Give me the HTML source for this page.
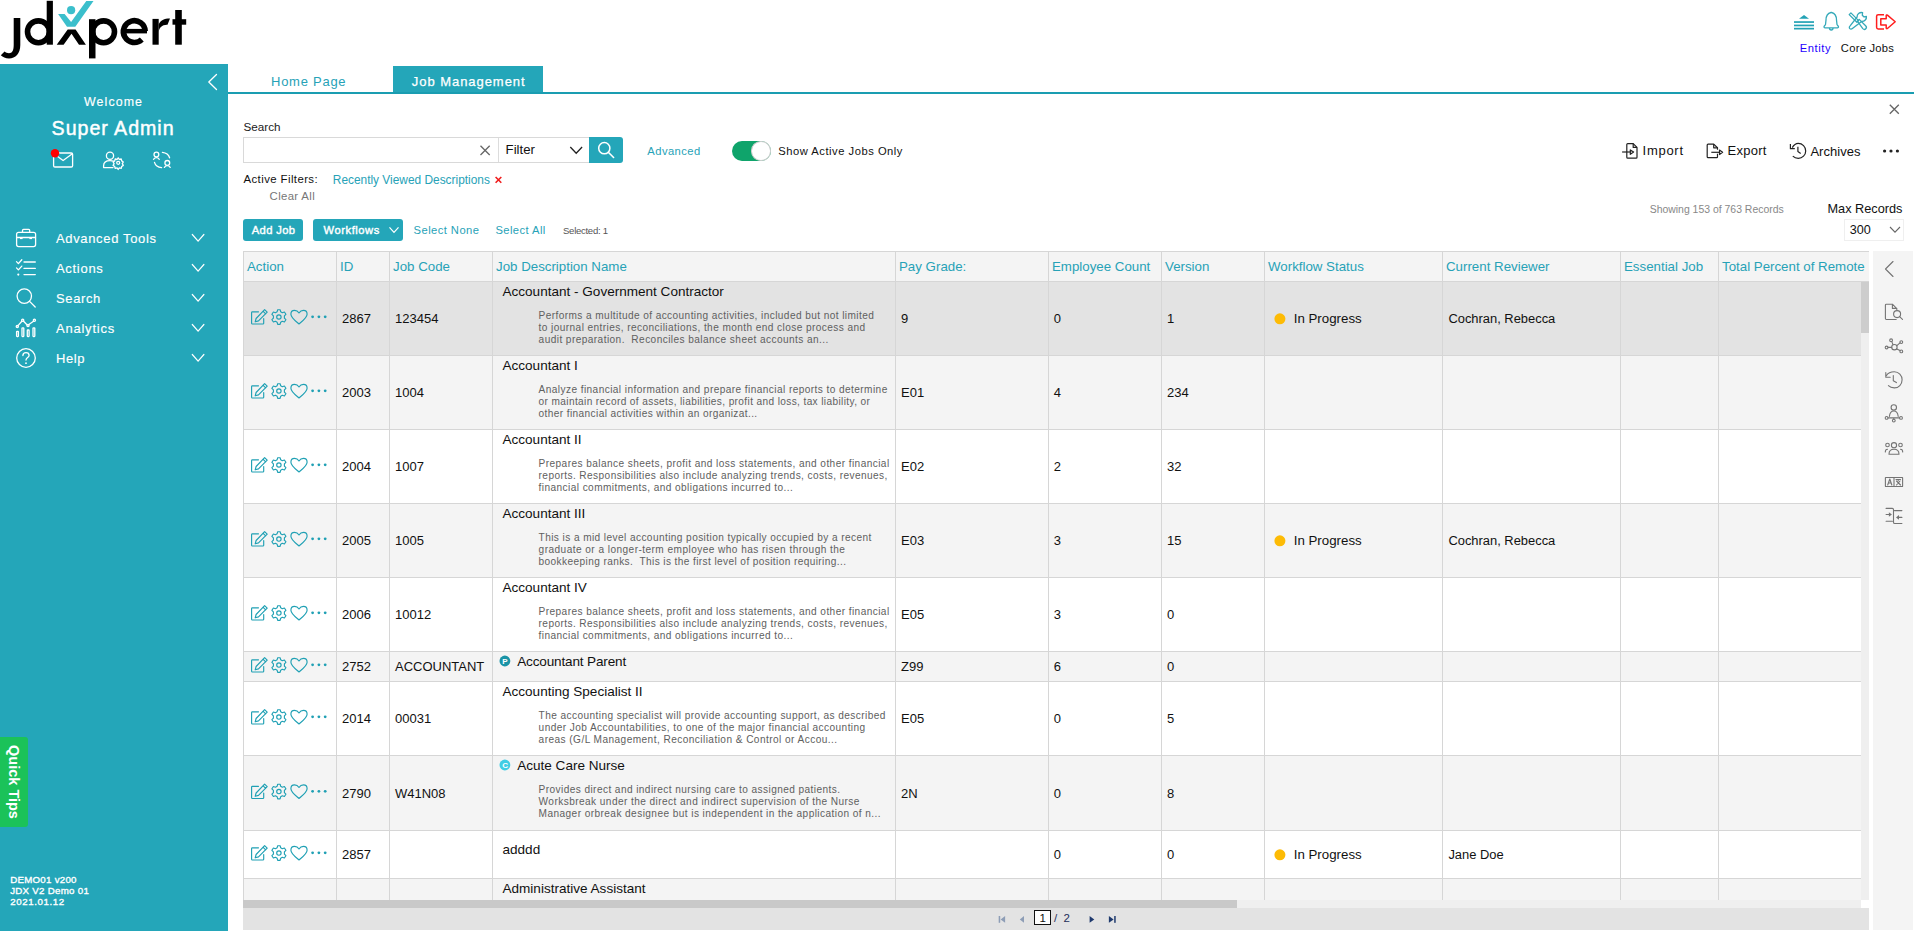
<!DOCTYPE html>
<html><head><meta charset="utf-8"><style>
html,body{margin:0;padding:0;width:1914px;height:931px;overflow:hidden;background:#fff;position:relative;font-family:'Liberation Sans', sans-serif;}
.t{position:absolute;white-space:pre;}
.r{position:absolute;}
svg.r{overflow:visible;}
</style></head><body>
<svg class="r" style="left:0px;top:0px;" width="190" height="62" viewBox="0 0 190 62">
<path d="M13.7,17.9H20.3V45C20.3,53.5 15.5,58.4 9,58.4C5.5,58.4 2.8,57.2 0.8,55.2L4.6,51.6C5.8,52.7 7.2,53.2 9,53.2C12,53.2 13.7,50.8 13.7,45Z" fill="#000"/>
<circle cx="38.4" cy="31.8" r="10.9" fill="none" stroke="#000" stroke-width="5.6"/>
<rect x="46.7" y="0.8" width="6.2" height="43.9" fill="#000"/>
<polygon points="58.1,14.1 64.6,14.1 71.1,22 86.3,1 93.5,1 75.3,26.8 67,26.8" fill="#3bbfcc"/>
<circle cx="71.1" cy="10.2" r="4.1" fill="#3bbfcc"/>
<polygon points="56.7,44.7 67.7,29.6 75.6,29.6 85.9,44.7 79,44.7 71.5,33.7 63.6,44.7" fill="#000"/>
<rect x="89" y="19.2" width="6.5" height="39.2" fill="#000"/>
<circle cx="103.6" cy="31.8" r="10.9" fill="none" stroke="#000" stroke-width="5.6"/>
<path d="M145.2,31.2 A10.9,10.9 0 1 0 141.8,39.5" fill="none" stroke="#000" stroke-width="5.6"/>
<rect x="124" y="28.9" width="23" height="4.5" fill="#000"/>
<rect x="152.5" y="18.9" width="6.2" height="25.8" fill="#000"/>
<path d="M158.7,24.5C160.5,20.5 164,18.6 170,18.6L167.5,24.8C162.5,24.5 158.7,27.5 158.7,33Z" fill="#000"/>
<rect x="175.2" y="10" width="6.6" height="34.7" fill="#000"/>
<rect x="172.5" y="19.2" width="13.7" height="5.5" fill="#000"/>
</svg>
<svg class="r" style="left:0px;top:0px;" width="1914" height="40" viewBox="0 0 1914 40">
<g fill="#23a2b5">
<polygon points="1799,18.7 1804,15 1809,18.7"/>
<rect x="1794" y="21.2" width="20" height="1.7"/>
<rect x="1794" y="24.6" width="20" height="1.7"/>
<rect x="1794" y="27.8" width="20" height="1.7"/>
</g>
<g fill="none" stroke="#35a9b9" stroke-width="1.3" stroke-linejoin="round">
<path d="M1831,12.5 C1827,13.5 1826,16.5 1826,20 L1825.5,24.5 C1825,25.5 1824,26 1824,27 C1824,27.6 1824.5,27.8 1825,27.8 L1837.5,27.8 C1838,27.8 1838.5,27.6 1838.5,27 C1838.5,26 1837.5,25.5 1837,24.5 L1836.5,20 C1836.5,16.5 1835.5,13.5 1831.5,12.5 Z"/>
<path d="M1829.5,28 C1829.5,29.5 1830.3,30 1831.2,30 C1832.1,30 1833,29.5 1833,28"/>
</g>
<g fill="none" stroke="#35a9b9" stroke-width="1.3" stroke-linejoin="round">
<path d="M1849.2,14.6 L1850.9,12.9 L1858.6,20.6 L1856.9,22.3 Z"/>
<path d="M1857.4,21.2 L1859.2,19.4 L1865.6,25.8 C1866.6,26.8 1866.6,28 1865.8,28.8 C1865,29.6 1863.8,29.6 1862.8,28.6 Z"/>
<path d="M1862.6,12.6 L1862.3,15.3 L1863.8,16.8 L1866.4,16.5 C1866.8,19.2 1864.6,21.6 1861.6,21.4 L1852.4,28.6 C1851.6,29.3 1850.4,29.3 1849.8,28.6 C1849.1,27.9 1849.2,26.8 1849.9,26.1 L1857.1,17 C1856.9,14.2 1859.4,12 1862.6,12.6 Z"/>
</g>
<path d="M1884,14.7 H1878.2 C1877,14.7 1876.6,15.3 1876.6,16.3 V27.3 C1876.6,28.3 1877,28.9 1878.2,28.9 H1884 M1880.8,18.7 H1886.2 V15.6 C1886.2,14.9 1886.9,14.7 1887.4,15.1 L1895.2,21.8 L1887.4,28.5 C1886.9,28.9 1886.2,28.7 1886.2,28 V25 H1880.8 Z" fill="none" stroke="#ff1e1e" stroke-width="1.5" stroke-linejoin="round"/>
</svg>
<div class="t" style="left:1799.70px;top:43px;font-size:11.2px;line-height:11.2px;color:#2400ff;font-weight:400;letter-spacing:0.598px;">Entity</div>
<div class="t" style="left:1840.80px;top:43px;font-size:11.2px;line-height:11.2px;color:#111;font-weight:400;letter-spacing:0.269px;">Core Jobs</div>
<div class="r" style="left:0px;top:64px;width:228px;height:867px;background:#24a6b9;"></div>
<svg class="r" style="left:0px;top:0px;" width="228" height="200" viewBox="0 0 228 200">
<g fill="none" stroke="#fff" stroke-width="1.3" stroke-linecap="round" stroke-linejoin="round">
<polyline points="216.5,74.5 208.8,82 216.5,89.5"/>
<rect x="53.6" y="153" width="19" height="14" rx="1.3"/>
<polyline points="54.2,154 63.1,160.5 72,154"/>
<circle cx="110" cy="155.8" r="3.6"/>
<path d="M103.6,167.6 V165.8 C103.6,162.5 106.2,160.6 110,160.6 C111.3,160.6 112.4,160.8 113.3,161.2 M103.6,167.6 H113"/>
<g transform="translate(0.3,-1)"><circle cx="117.9" cy="163.8" r="1.5"/>
<path d="M117.9,158.9 l1.1,1.6 1.9,-0.5 0.5,1.9 1.6,1.1 -1,1.7 1,1.7 -1.6,1.1 -0.5,1.9 -1.9,-0.5 -1.1,1.6 -1.1,-1.6 -1.9,0.5 -0.5,-1.9 -1.6,-1.1 1,-1.7 -1,-1.7 1.6,-1.1 0.5,-1.9 1.9,0.5 Z"/></g>
<circle cx="156.4" cy="154.5" r="2.4"/>
<path d="M153.5,159.3 C154.5,157.9 155.3,157.6 156.4,157.6 C157.5,157.6 158.3,157.9 159.3,159.3"/>
<circle cx="167.3" cy="162.9" r="2.4"/>
<path d="M164.4,167.4 C165.4,166 166.2,165.7 167.3,165.7 C168.4,165.7 169.2,166 170.2,167.4"/>
<path d="M162.4,152.4 C166,152.8 168.8,155 169.6,157.8"/>
<path d="M154.5,162.3 C155.3,165.2 158,167.2 161.6,167.6"/>
</g>
<circle cx="55" cy="153.2" r="4.2" fill="#ff0000"/>
</svg>
<div class="t" style="left:84.00px;top:96px;font-size:12.4px;line-height:12.4px;color:#fff;font-weight:400;letter-spacing:1.091px;-webkit-text-stroke:0.15px #fff;">Welcome</div>
<div class="t" style="left:51.60px;top:119px;font-size:19.6px;line-height:19.6px;color:#fff;font-weight:400;letter-spacing:0.977px;-webkit-text-stroke:0.45px #fff;">Super Admin</div>
<svg class="r" style="left:0px;top:0px;" width="228" height="400" viewBox="0 0 228 400">
<g fill="none" stroke="#fff" stroke-width="1.3" stroke-linecap="round" stroke-linejoin="round">
<rect x="16.6" y="232.3" width="19" height="14.3" rx="2"/>
<path d="M22.5,232.2 V230.4 C22.5,229.8 22.9,229.4 23.5,229.4 H28.7 C29.3,229.4 29.7,229.8 29.7,230.4 V232.2"/>
<path d="M16.8,237.5 H35.4"/>
<path d="M16.5,261.6 L18.4,263.6 L21.8,259.8 M16.5,267.9 L18.4,269.9 L21.8,266.1"/>
<path d="M24,262 H35.3 M24,268.4 H35.3 M24,274.6 H35.3"/>
<circle cx="24.3" cy="296.1" r="7.2"/>
<path d="M29.6,301.4 L35.2,307"/>
<path d="M18,325.6 L21.8,321.3 M23.6,321.2 L27,324.7 M28.9,324.6 L33.5,321.2"/>
<circle cx="17.3" cy="326.6" r="1.1"/><circle cx="22.7" cy="320.3" r="1.1"/><circle cx="28" cy="325.6" r="1.1"/><circle cx="34.4" cy="320.3" r="1.1"/>
<rect x="16.6" y="331.3" width="1.8" height="5.3" rx="0.5"/>
<rect x="22" y="327.8" width="1.8" height="8.8" rx="0.5"/>
<rect x="27.3" y="330" width="1.8" height="6.6" rx="0.5"/>
<rect x="33" y="327.8" width="1.8" height="8.8" rx="0.5"/>
<circle cx="26" cy="358" r="9.3"/>
<path d="M22.9,355.6 C22.9,353.6 24.3,352.6 26,352.6 C27.8,352.6 29.1,353.6 29.1,355.4 C29.1,357.5 26,357.6 26,360"/>
</g>
<g fill="#fff">
<rect x="20" y="237.6" width="2.6" height="1.5"/><rect x="29.4" y="237.6" width="2.6" height="1.5"/>
<circle cx="18.3" cy="274.6" r="1.1"/>
<circle cx="26" cy="363.2" r="0.9"/>
</g>
<g fill="none" stroke="#fff" stroke-width="1.2" stroke-linecap="round">
<polyline points="192.3,234.5 198.1,241.2 203.9,234.5"/>
<polyline points="192.3,264.5 198.1,271.2 203.9,264.5"/>
<polyline points="192.3,294.5 198.1,301.2 203.9,294.5"/>
<polyline points="192.3,324.5 198.1,331.2 203.9,324.5"/>
<polyline points="192.3,354.5 198.1,361.2 203.9,354.5"/>
</g>
</svg>
<div class="t" style="left:56.00px;top:232px;font-size:13px;line-height:13px;color:#fff;font-weight:400;letter-spacing:0.650px;-webkit-text-stroke:0.15px #fff;">Advanced Tools</div>
<div class="t" style="left:56.00px;top:262px;font-size:13px;line-height:13px;color:#fff;font-weight:400;letter-spacing:0.695px;-webkit-text-stroke:0.15px #fff;">Actions</div>
<div class="t" style="left:56.00px;top:292px;font-size:13px;line-height:13px;color:#fff;font-weight:400;letter-spacing:0.622px;-webkit-text-stroke:0.15px #fff;">Search</div>
<div class="t" style="left:56.00px;top:322px;font-size:13px;line-height:13px;color:#fff;font-weight:400;letter-spacing:0.772px;-webkit-text-stroke:0.15px #fff;">Analytics</div>
<div class="t" style="left:56.00px;top:352px;font-size:13px;line-height:13px;color:#fff;font-weight:400;letter-spacing:0.621px;-webkit-text-stroke:0.15px #fff;">Help</div>
<div class="r" style="left:0px;top:737px;width:28px;height:90px;background:#1bc259;border-radius:0 3px 3px 0;"></div>
<div class="t" style="left:-31px;top:773px;width:90px;height:18px;font-size:14.5px;line-height:18px;color:#fff;font-weight:700;text-align:center;transform:rotate(90deg);">Quick Tips</div>
<div class="t" style="left:10.20px;top:875px;font-size:9.7px;line-height:9.7px;color:#fff;font-weight:400;letter-spacing:0.278px;-webkit-text-stroke:0.35px #fff;">DEMO01 v200</div>
<div class="t" style="left:10.20px;top:886px;font-size:9.7px;line-height:9.7px;color:#fff;font-weight:400;letter-spacing:0.289px;-webkit-text-stroke:0.35px #fff;">JDX V2 Demo 01</div>
<div class="t" style="left:10.20px;top:897px;font-size:9.7px;line-height:9.7px;color:#fff;font-weight:400;letter-spacing:0.606px;-webkit-text-stroke:0.35px #fff;">2021.01.12</div>
<div class="r" style="left:393px;top:66px;width:150px;height:27px;background:#24a6b9;"></div>
<div class="r" style="left:228px;top:92px;width:1686px;height:2px;background:#1a9db1;"></div>
<div class="t" style="left:271.00px;top:75px;font-size:13px;line-height:13px;color:#27a2b7;font-weight:400;letter-spacing:0.743px;">Home Page</div>
<div class="t" style="left:411.80px;top:75px;font-size:13px;line-height:13px;color:#fff;font-weight:400;letter-spacing:0.950px;-webkit-text-stroke:0.25px #fff;">Job Management</div>
<svg class="r" style="left:0px;top:0px;" width="1914" height="120" viewBox="0 0 1914 120"><path d="M1889.8,104.8 L1898.8,113.8 M1898.8,104.8 L1889.8,113.8" stroke="#666" stroke-width="1.3" fill="none"/></svg>
<div class="t" style="left:243.50px;top:121px;font-size:11.7px;line-height:11.7px;color:#222;font-weight:400;letter-spacing:0.000px;">Search</div>
<div class="r" style="left:243px;top:137px;width:346px;height:26px;background:#fff;box-sizing:border-box;border:1px solid #d9d9d9;border-right:none;"></div>
<div class="r" style="left:498px;top:138px;width:1px;height:24px;background:#dcdcdc;"></div>
<svg class="r" style="left:0px;top:0px;" width="700" height="170" viewBox="0 0 700 170">
<path d="M480.5,145.8 L489.7,155 M489.7,145.8 L480.5,155" stroke="#666" stroke-width="1.3" fill="none"/>
<polyline points="570.3,147 576.2,153.2 582.1,147" stroke="#222" stroke-width="1.3" fill="none"/>
</svg>
<div class="t" style="left:505.60px;top:143px;font-size:13.2px;line-height:13.2px;color:#111;font-weight:400;letter-spacing:0.000px;">Filter</div>
<div class="r" style="left:589px;top:137px;width:34px;height:26px;background:#24a6b9;border-radius:0 3px 3px 0;"></div>
<svg class="r" style="left:0px;top:0px;" width="700" height="170" viewBox="0 0 700 170">
<circle cx="604.3" cy="148.2" r="5.6" fill="none" stroke="#fff" stroke-width="1.5"/>
<path d="M608.3,152.2 L613.6,157.5" stroke="#fff" stroke-width="1.6" stroke-linecap="round"/>
</svg>
<div class="t" style="left:647.30px;top:146px;font-size:11.2px;line-height:11.2px;color:#27a2b7;font-weight:400;letter-spacing:0.455px;">Advanced</div>
<div class="r" style="left:732px;top:141px;width:39px;height:19.5px;background:#0fa46b;border-radius:10px;"></div>
<div class="r" style="left:751px;top:141px;width:20px;height:19.5px;background:#fff;border-radius:50%;box-sizing:border-box;border:1px solid #cfcfcf;"></div>
<div class="t" style="left:778.20px;top:146px;font-size:11.2px;line-height:11.2px;color:#111;font-weight:400;letter-spacing:0.524px;">Show Active Jobs Only</div>
<svg class="r" style="left:0px;top:0px;" width="1914" height="170" viewBox="0 0 1914 170">
<g fill="none" stroke="#222" stroke-width="1.2" stroke-linejoin="round">
<path d="M1626.8,144.5 C1626.8,144 1627.2,143.6 1627.7,143.6 H1633.2 L1637,147.4 V157.3 C1637,157.8 1636.6,158.2 1636.1,158.2 H1627.7 C1627.2,158.2 1626.8,157.8 1626.8,157.3 Z"/>
<path d="M1633.2,143.6 V147.4 H1637"/>
<path d="M1622.1,152 H1630.3"/>
<path d="M1630.3,149.9 L1633.6,152 L1630.3,154.3 Z"/>
<path d="M1717.5,149.7 V147.8 L1713.7,144.1 H1708.1 C1707.6,144.1 1707.2,144.5 1707.2,145 V156.7 C1707.2,157.2 1707.6,157.6 1708.1,157.6 H1716.6 C1717.1,157.6 1717.5,157.2 1717.5,156.7 V153.8"/>
<path d="M1713.7,144.1 V147.8 H1717.5"/>
<path d="M1711.3,152.3 H1719.5"/>
<path d="M1719.5,150.1 L1722.6,152.3 L1719.5,154.5 Z"/>
<path d="M1792.3,147.6 C1793.7,145.1 1795.8,143.4 1798.3,143.4 C1802.4,143.4 1805.7,146.8 1805.7,150.9 C1805.7,155 1802.4,158.4 1798.3,158.4 C1795.9,158.4 1794.1,157.5 1792.8,156.2"/>
<path d="M1790.4,144 V148.7 H1794.8"/>
<path d="M1797.9,146.8 V151.5 L1800.7,153.4"/>
</g>
<g fill="#222"><circle cx="1884.6" cy="151" r="1.6"/><circle cx="1891" cy="151" r="1.6"/><circle cx="1897.4" cy="151" r="1.6"/></g>
</svg>
<div class="t" style="left:1642.60px;top:144px;font-size:13px;line-height:13px;color:#111;font-weight:400;letter-spacing:0.711px;">Import</div>
<div class="t" style="left:1727.50px;top:144px;font-size:13px;line-height:13px;color:#111;font-weight:400;letter-spacing:0.265px;">Export</div>
<div class="t" style="left:1810.40px;top:145px;font-size:13px;line-height:13px;color:#111;font-weight:400;letter-spacing:0.050px;">Archives</div>
<div class="t" style="left:243.50px;top:174px;font-size:11.4px;line-height:11.4px;color:#111;font-weight:400;letter-spacing:0.413px;">Active Filters:</div>
<div class="t" style="left:332.80px;top:175px;font-size:11.9px;line-height:11.9px;color:#27a2b7;font-weight:400;letter-spacing:0.000px;">Recently Viewed Descriptions</div>
<svg class="r" style="left:0px;top:0px;" width="700" height="200" viewBox="0 0 700 200"><path d="M495.6,177 L501.3,182.7 M501.3,177 L495.6,182.7" stroke="#f01c1c" stroke-width="1.6" fill="none"/></svg>
<div class="t" style="left:269.60px;top:191px;font-size:11.4px;line-height:11.4px;color:#777;font-weight:400;letter-spacing:0.331px;">Clear All</div>
<div class="r" style="left:243px;top:219px;width:60px;height:22px;background:#24a6b9;border-radius:3px;"></div>
<div class="t" style="left:251.80px;top:225px;font-size:11.2px;line-height:11.2px;color:#fff;font-weight:400;letter-spacing:0.350px;-webkit-text-stroke:0.4px #fff;">Add Job</div>
<div class="r" style="left:313px;top:219px;width:90px;height:22px;background:#24a6b9;border-radius:3px;"></div>
<div class="t" style="left:323.60px;top:225px;font-size:11.2px;line-height:11.2px;color:#fff;font-weight:400;letter-spacing:0.544px;-webkit-text-stroke:0.4px #fff;">Workflows</div>
<svg class="r" style="left:0px;top:0px;" width="700" height="250" viewBox="0 0 700 250"><polyline points="389.5,227.3 394,232.3 398.5,227.3" stroke="#fff" stroke-width="1.2" fill="none"/></svg>
<div class="t" style="left:413.60px;top:225px;font-size:11.2px;line-height:11.2px;color:#27a2b7;font-weight:400;letter-spacing:0.438px;">Select None</div>
<div class="t" style="left:495.40px;top:225px;font-size:11.2px;line-height:11.2px;color:#27a2b7;font-weight:400;letter-spacing:0.437px;">Select All</div>
<div class="t" style="left:563.00px;top:226px;font-size:9.6px;line-height:9.6px;color:#555;font-weight:400;letter-spacing:-0.303px;">Selected: 1</div>
<div class="t" style="left:1649.70px;top:205px;font-size:10.45px;line-height:10.45px;color:#888;font-weight:400;letter-spacing:0.000px;">Showing 153 of 763 Records</div>
<div class="t" style="left:1827.50px;top:203px;font-size:12.73px;line-height:12.73px;color:#111;font-weight:400;letter-spacing:0.000px;">Max Records</div>
<div class="r" style="left:1844px;top:219px;width:60px;height:22px;background:#fff;box-sizing:border-box;border:1px solid #efefef;"></div>
<div class="t" style="left:1849.70px;top:224px;font-size:12.6px;line-height:12.6px;color:#111;font-weight:400;letter-spacing:0.000px;">300</div>
<svg class="r" style="left:0px;top:0px;" width="1914" height="250" viewBox="0 0 1914 250"><polyline points="1890,227 1895,232.2 1900,227" stroke="#666" stroke-width="1.1" fill="none"/></svg>
<div class="r" style="left:243px;top:251px;width:1626px;height:30px;background:#f4f4f4;"></div>
<div class="r" style="left:243px;top:251px;width:1626px;height:1px;background:#d6d6d6;"></div>
<div class="r" style="left:243px;top:282px;width:1618px;height:73px;background:#e3e3e3;"></div>
<div class="r" style="left:243px;top:356px;width:1618px;height:73px;background:#f4f4f4;"></div>
<div class="r" style="left:243px;top:430px;width:1618px;height:73px;background:#fff;"></div>
<div class="r" style="left:243px;top:504px;width:1618px;height:73px;background:#f4f4f4;"></div>
<div class="r" style="left:243px;top:578px;width:1618px;height:73px;background:#fff;"></div>
<div class="r" style="left:243px;top:652px;width:1618px;height:29px;background:#f4f4f4;"></div>
<div class="r" style="left:243px;top:682px;width:1618px;height:73px;background:#fff;"></div>
<div class="r" style="left:243px;top:756px;width:1618px;height:74px;background:#f4f4f4;"></div>
<div class="r" style="left:243px;top:831px;width:1618px;height:47px;background:#fff;"></div>
<div class="r" style="left:243px;top:879px;width:1618px;height:21px;background:#f4f4f4;"></div>
<div class="r" style="left:243px;top:281px;width:1626px;height:1px;background:#d6d6d6;"></div>
<div class="r" style="left:243px;top:355px;width:1618px;height:1px;background:#d6d6d6;"></div>
<div class="r" style="left:243px;top:429px;width:1618px;height:1px;background:#d6d6d6;"></div>
<div class="r" style="left:243px;top:503px;width:1618px;height:1px;background:#d6d6d6;"></div>
<div class="r" style="left:243px;top:577px;width:1618px;height:1px;background:#d6d6d6;"></div>
<div class="r" style="left:243px;top:651px;width:1618px;height:1px;background:#d6d6d6;"></div>
<div class="r" style="left:243px;top:681px;width:1618px;height:1px;background:#d6d6d6;"></div>
<div class="r" style="left:243px;top:755px;width:1618px;height:1px;background:#d6d6d6;"></div>
<div class="r" style="left:243px;top:830px;width:1618px;height:1px;background:#d6d6d6;"></div>
<div class="r" style="left:243px;top:878px;width:1618px;height:1px;background:#d6d6d6;"></div>
<div class="r" style="left:243px;top:251px;width:1px;height:649px;background:#d6d6d6;"></div>
<div class="r" style="left:336px;top:251px;width:1px;height:649px;background:#d6d6d6;"></div>
<div class="r" style="left:389px;top:251px;width:1px;height:649px;background:#d6d6d6;"></div>
<div class="r" style="left:492px;top:251px;width:1px;height:649px;background:#d6d6d6;"></div>
<div class="r" style="left:895px;top:251px;width:1px;height:649px;background:#d6d6d6;"></div>
<div class="r" style="left:1048px;top:251px;width:1px;height:649px;background:#d6d6d6;"></div>
<div class="r" style="left:1161px;top:251px;width:1px;height:649px;background:#d6d6d6;"></div>
<div class="r" style="left:1264px;top:251px;width:1px;height:649px;background:#d6d6d6;"></div>
<div class="r" style="left:1442px;top:251px;width:1px;height:649px;background:#d6d6d6;"></div>
<div class="r" style="left:1620px;top:251px;width:1px;height:649px;background:#d6d6d6;"></div>
<div class="r" style="left:1718px;top:251px;width:1px;height:649px;background:#d6d6d6;"></div>
<div class="t" style="left:247.00px;top:260px;font-size:13.3px;line-height:13.3px;color:#27a2b7;font-weight:400;letter-spacing:0.000px;">Action</div>
<div class="t" style="left:340.00px;top:260px;font-size:13.3px;line-height:13.3px;color:#27a2b7;font-weight:400;letter-spacing:0.000px;">ID</div>
<div class="t" style="left:393.00px;top:260px;font-size:13.3px;line-height:13.3px;color:#27a2b7;font-weight:400;letter-spacing:0.000px;">Job Code</div>
<div class="t" style="left:496.00px;top:260px;font-size:13.3px;line-height:13.3px;color:#27a2b7;font-weight:400;letter-spacing:0.000px;">Job Description Name</div>
<div class="t" style="left:899.00px;top:260px;font-size:13.3px;line-height:13.3px;color:#27a2b7;font-weight:400;letter-spacing:0.000px;">Pay Grade:</div>
<div class="t" style="left:1052.00px;top:260px;font-size:13.3px;line-height:13.3px;color:#27a2b7;font-weight:400;letter-spacing:0.000px;">Employee Count</div>
<div class="t" style="left:1165.00px;top:260px;font-size:13.3px;line-height:13.3px;color:#27a2b7;font-weight:400;letter-spacing:0.000px;">Version</div>
<div class="t" style="left:1268.00px;top:260px;font-size:13.3px;line-height:13.3px;color:#27a2b7;font-weight:400;letter-spacing:0.000px;">Workflow Status</div>
<div class="t" style="left:1446.00px;top:260px;font-size:13.3px;line-height:13.3px;color:#27a2b7;font-weight:400;letter-spacing:0.000px;">Current Reviewer</div>
<div class="t" style="left:1624.00px;top:260px;font-size:13.3px;line-height:13.3px;color:#27a2b7;font-weight:400;letter-spacing:0.000px;">Essential Job</div>
<div class="t" style="left:1722.00px;top:260px;font-size:13.3px;line-height:13.3px;color:#27a2b7;font-weight:400;letter-spacing:0.000px;">Total Percent of Remote</div>
<svg class="r" style="left:0px;top:0px;" width="1914" height="931" viewBox="0 0 1914 931">
<g fill="none" stroke="#1fa0b4" stroke-width="1.15" stroke-linejoin="round" stroke-linecap="round">
<path d="M258.5,311.8 H252.4 C251.9,311.8 251.6,312.1 251.6,312.6 V323.2 C251.6,323.7 251.9,324.0 252.4,324.0 H262.9 C263.4,324.0 263.7,323.7 263.7,323.2 V318.5"/>
<path d="M264.6,309.6 L267.2,312.2 L258.5,320.9 L255.2,321.8 L256.1,318.5 Z M263,311.2 L265.6,313.8"/>
<path d="M299,313.0 C297.8,311.0 296,310.3 294.5,310.3 C292.4,310.3 290.9,312.0 290.9,314.2 C290.9,317.5 295,320.6 299,324.0 C303,320.6 307.1,317.5 307.1,314.2 C307.1,312.0 305.6,310.3 303.5,310.3 C302,310.3 300.2,311.0 299,313.0 Z"/>
<circle cx="278.9" cy="317.0" r="2.2"/>
</g>
<g transform="translate(278.9,317.0)" fill="none" stroke="#1fa0b4" stroke-width="1.15" stroke-linejoin="round">
<path d="M-1.2,-7.3 L1.2,-7.3 L1.8,-5.2 L3.4,-4.3 L5.5,-5 L7,-2.7 L5.5,-1.2 L5.5,1.2 L7,2.7 L5.5,5 L3.4,4.3 L1.8,5.2 L1.2,7.3 L-1.2,7.3 L-1.8,5.2 L-3.4,4.3 L-5.5,5 L-7,2.7 L-5.5,1.2 L-5.5,-1.2 L-7,-2.7 L-5.5,-5 L-3.4,-4.3 L-1.8,-5.2 Z"/>
</g>
<g fill="#1fa0b4"><circle cx="312.6" cy="316.8" r="1.4"/><circle cx="318.9" cy="316.8" r="1.4"/><circle cx="325.2" cy="316.8" r="1.4"/></g>
<circle cx="1279.9" cy="318.8" r="5.5" fill="#fdbb05"/>
<g fill="none" stroke="#1fa0b4" stroke-width="1.15" stroke-linejoin="round" stroke-linecap="round">
<path d="M258.5,385.8 H252.4 C251.9,385.8 251.6,386.1 251.6,386.6 V397.2 C251.6,397.7 251.9,398.0 252.4,398.0 H262.9 C263.4,398.0 263.7,397.7 263.7,397.2 V392.5"/>
<path d="M264.6,383.6 L267.2,386.2 L258.5,394.9 L255.2,395.8 L256.1,392.5 Z M263,385.2 L265.6,387.8"/>
<path d="M299,387.0 C297.8,385.0 296,384.3 294.5,384.3 C292.4,384.3 290.9,386.0 290.9,388.2 C290.9,391.5 295,394.6 299,398.0 C303,394.6 307.1,391.5 307.1,388.2 C307.1,386.0 305.6,384.3 303.5,384.3 C302,384.3 300.2,385.0 299,387.0 Z"/>
<circle cx="278.9" cy="391.0" r="2.2"/>
</g>
<g transform="translate(278.9,391.0)" fill="none" stroke="#1fa0b4" stroke-width="1.15" stroke-linejoin="round">
<path d="M-1.2,-7.3 L1.2,-7.3 L1.8,-5.2 L3.4,-4.3 L5.5,-5 L7,-2.7 L5.5,-1.2 L5.5,1.2 L7,2.7 L5.5,5 L3.4,4.3 L1.8,5.2 L1.2,7.3 L-1.2,7.3 L-1.8,5.2 L-3.4,4.3 L-5.5,5 L-7,2.7 L-5.5,1.2 L-5.5,-1.2 L-7,-2.7 L-5.5,-5 L-3.4,-4.3 L-1.8,-5.2 Z"/>
</g>
<g fill="#1fa0b4"><circle cx="312.6" cy="390.8" r="1.4"/><circle cx="318.9" cy="390.8" r="1.4"/><circle cx="325.2" cy="390.8" r="1.4"/></g>

<g fill="none" stroke="#1fa0b4" stroke-width="1.15" stroke-linejoin="round" stroke-linecap="round">
<path d="M258.5,459.8 H252.4 C251.9,459.8 251.6,460.1 251.6,460.6 V471.2 C251.6,471.7 251.9,472.0 252.4,472.0 H262.9 C263.4,472.0 263.7,471.7 263.7,471.2 V466.5"/>
<path d="M264.6,457.6 L267.2,460.2 L258.5,468.9 L255.2,469.8 L256.1,466.5 Z M263,459.2 L265.6,461.8"/>
<path d="M299,461.0 C297.8,459.0 296,458.3 294.5,458.3 C292.4,458.3 290.9,460.0 290.9,462.2 C290.9,465.5 295,468.6 299,472.0 C303,468.6 307.1,465.5 307.1,462.2 C307.1,460.0 305.6,458.3 303.5,458.3 C302,458.3 300.2,459.0 299,461.0 Z"/>
<circle cx="278.9" cy="465.0" r="2.2"/>
</g>
<g transform="translate(278.9,465.0)" fill="none" stroke="#1fa0b4" stroke-width="1.15" stroke-linejoin="round">
<path d="M-1.2,-7.3 L1.2,-7.3 L1.8,-5.2 L3.4,-4.3 L5.5,-5 L7,-2.7 L5.5,-1.2 L5.5,1.2 L7,2.7 L5.5,5 L3.4,4.3 L1.8,5.2 L1.2,7.3 L-1.2,7.3 L-1.8,5.2 L-3.4,4.3 L-5.5,5 L-7,2.7 L-5.5,1.2 L-5.5,-1.2 L-7,-2.7 L-5.5,-5 L-3.4,-4.3 L-1.8,-5.2 Z"/>
</g>
<g fill="#1fa0b4"><circle cx="312.6" cy="464.8" r="1.4"/><circle cx="318.9" cy="464.8" r="1.4"/><circle cx="325.2" cy="464.8" r="1.4"/></g>

<g fill="none" stroke="#1fa0b4" stroke-width="1.15" stroke-linejoin="round" stroke-linecap="round">
<path d="M258.5,533.8 H252.4 C251.9,533.8 251.6,534.1 251.6,534.6 V545.2 C251.6,545.7 251.9,546.0 252.4,546.0 H262.9 C263.4,546.0 263.7,545.7 263.7,545.2 V540.5"/>
<path d="M264.6,531.6 L267.2,534.2 L258.5,542.9 L255.2,543.8 L256.1,540.5 Z M263,533.2 L265.6,535.8"/>
<path d="M299,535.0 C297.8,533.0 296,532.3 294.5,532.3 C292.4,532.3 290.9,534.0 290.9,536.2 C290.9,539.5 295,542.6 299,546.0 C303,542.6 307.1,539.5 307.1,536.2 C307.1,534.0 305.6,532.3 303.5,532.3 C302,532.3 300.2,533.0 299,535.0 Z"/>
<circle cx="278.9" cy="539.0" r="2.2"/>
</g>
<g transform="translate(278.9,539.0)" fill="none" stroke="#1fa0b4" stroke-width="1.15" stroke-linejoin="round">
<path d="M-1.2,-7.3 L1.2,-7.3 L1.8,-5.2 L3.4,-4.3 L5.5,-5 L7,-2.7 L5.5,-1.2 L5.5,1.2 L7,2.7 L5.5,5 L3.4,4.3 L1.8,5.2 L1.2,7.3 L-1.2,7.3 L-1.8,5.2 L-3.4,4.3 L-5.5,5 L-7,2.7 L-5.5,1.2 L-5.5,-1.2 L-7,-2.7 L-5.5,-5 L-3.4,-4.3 L-1.8,-5.2 Z"/>
</g>
<g fill="#1fa0b4"><circle cx="312.6" cy="538.8" r="1.4"/><circle cx="318.9" cy="538.8" r="1.4"/><circle cx="325.2" cy="538.8" r="1.4"/></g>
<circle cx="1279.9" cy="540.8" r="5.5" fill="#fdbb05"/>
<g fill="none" stroke="#1fa0b4" stroke-width="1.15" stroke-linejoin="round" stroke-linecap="round">
<path d="M258.5,607.8 H252.4 C251.9,607.8 251.6,608.1 251.6,608.6 V619.2 C251.6,619.7 251.9,620.0 252.4,620.0 H262.9 C263.4,620.0 263.7,619.7 263.7,619.2 V614.5"/>
<path d="M264.6,605.6 L267.2,608.2 L258.5,616.9 L255.2,617.8 L256.1,614.5 Z M263,607.2 L265.6,609.8"/>
<path d="M299,609.0 C297.8,607.0 296,606.3 294.5,606.3 C292.4,606.3 290.9,608.0 290.9,610.2 C290.9,613.5 295,616.6 299,620.0 C303,616.6 307.1,613.5 307.1,610.2 C307.1,608.0 305.6,606.3 303.5,606.3 C302,606.3 300.2,607.0 299,609.0 Z"/>
<circle cx="278.9" cy="613.0" r="2.2"/>
</g>
<g transform="translate(278.9,613.0)" fill="none" stroke="#1fa0b4" stroke-width="1.15" stroke-linejoin="round">
<path d="M-1.2,-7.3 L1.2,-7.3 L1.8,-5.2 L3.4,-4.3 L5.5,-5 L7,-2.7 L5.5,-1.2 L5.5,1.2 L7,2.7 L5.5,5 L3.4,4.3 L1.8,5.2 L1.2,7.3 L-1.2,7.3 L-1.8,5.2 L-3.4,4.3 L-5.5,5 L-7,2.7 L-5.5,1.2 L-5.5,-1.2 L-7,-2.7 L-5.5,-5 L-3.4,-4.3 L-1.8,-5.2 Z"/>
</g>
<g fill="#1fa0b4"><circle cx="312.6" cy="612.8" r="1.4"/><circle cx="318.9" cy="612.8" r="1.4"/><circle cx="325.2" cy="612.8" r="1.4"/></g>

<g fill="none" stroke="#1fa0b4" stroke-width="1.15" stroke-linejoin="round" stroke-linecap="round">
<path d="M258.5,659.8 H252.4 C251.9,659.8 251.6,660.1 251.6,660.6 V671.2 C251.6,671.7 251.9,672.0 252.4,672.0 H262.9 C263.4,672.0 263.7,671.7 263.7,671.2 V666.5"/>
<path d="M264.6,657.6 L267.2,660.2 L258.5,668.9 L255.2,669.8 L256.1,666.5 Z M263,659.2 L265.6,661.8"/>
<path d="M299,661.0 C297.8,659.0 296,658.3 294.5,658.3 C292.4,658.3 290.9,660.0 290.9,662.2 C290.9,665.5 295,668.6 299,672.0 C303,668.6 307.1,665.5 307.1,662.2 C307.1,660.0 305.6,658.3 303.5,658.3 C302,658.3 300.2,659.0 299,661.0 Z"/>
<circle cx="278.9" cy="665.0" r="2.2"/>
</g>
<g transform="translate(278.9,665.0)" fill="none" stroke="#1fa0b4" stroke-width="1.15" stroke-linejoin="round">
<path d="M-1.2,-7.3 L1.2,-7.3 L1.8,-5.2 L3.4,-4.3 L5.5,-5 L7,-2.7 L5.5,-1.2 L5.5,1.2 L7,2.7 L5.5,5 L3.4,4.3 L1.8,5.2 L1.2,7.3 L-1.2,7.3 L-1.8,5.2 L-3.4,4.3 L-5.5,5 L-7,2.7 L-5.5,1.2 L-5.5,-1.2 L-7,-2.7 L-5.5,-5 L-3.4,-4.3 L-1.8,-5.2 Z"/>
</g>
<g fill="#1fa0b4"><circle cx="312.6" cy="664.8" r="1.4"/><circle cx="318.9" cy="664.8" r="1.4"/><circle cx="325.2" cy="664.8" r="1.4"/></g>
<circle cx="504.9" cy="661" r="5.4" fill="#1a93a6"/>
<g fill="none" stroke="#1fa0b4" stroke-width="1.15" stroke-linejoin="round" stroke-linecap="round">
<path d="M258.5,711.8 H252.4 C251.9,711.8 251.6,712.1 251.6,712.6 V723.2 C251.6,723.7 251.9,724.0 252.4,724.0 H262.9 C263.4,724.0 263.7,723.7 263.7,723.2 V718.5"/>
<path d="M264.6,709.6 L267.2,712.2 L258.5,720.9 L255.2,721.8 L256.1,718.5 Z M263,711.2 L265.6,713.8"/>
<path d="M299,713.0 C297.8,711.0 296,710.3 294.5,710.3 C292.4,710.3 290.9,712.0 290.9,714.2 C290.9,717.5 295,720.6 299,724.0 C303,720.6 307.1,717.5 307.1,714.2 C307.1,712.0 305.6,710.3 303.5,710.3 C302,710.3 300.2,711.0 299,713.0 Z"/>
<circle cx="278.9" cy="717.0" r="2.2"/>
</g>
<g transform="translate(278.9,717.0)" fill="none" stroke="#1fa0b4" stroke-width="1.15" stroke-linejoin="round">
<path d="M-1.2,-7.3 L1.2,-7.3 L1.8,-5.2 L3.4,-4.3 L5.5,-5 L7,-2.7 L5.5,-1.2 L5.5,1.2 L7,2.7 L5.5,5 L3.4,4.3 L1.8,5.2 L1.2,7.3 L-1.2,7.3 L-1.8,5.2 L-3.4,4.3 L-5.5,5 L-7,2.7 L-5.5,1.2 L-5.5,-1.2 L-7,-2.7 L-5.5,-5 L-3.4,-4.3 L-1.8,-5.2 Z"/>
</g>
<g fill="#1fa0b4"><circle cx="312.6" cy="716.8" r="1.4"/><circle cx="318.9" cy="716.8" r="1.4"/><circle cx="325.2" cy="716.8" r="1.4"/></g>

<g fill="none" stroke="#1fa0b4" stroke-width="1.15" stroke-linejoin="round" stroke-linecap="round">
<path d="M258.5,786.3 H252.4 C251.9,786.3 251.6,786.6 251.6,787.1 V797.7 C251.6,798.2 251.9,798.5 252.4,798.5 H262.9 C263.4,798.5 263.7,798.2 263.7,797.7 V793.0"/>
<path d="M264.6,784.1 L267.2,786.7 L258.5,795.4 L255.2,796.3 L256.1,793.0 Z M263,785.7 L265.6,788.3"/>
<path d="M299,787.5 C297.8,785.5 296,784.8 294.5,784.8 C292.4,784.8 290.9,786.5 290.9,788.7 C290.9,792.0 295,795.1 299,798.5 C303,795.1 307.1,792.0 307.1,788.7 C307.1,786.5 305.6,784.8 303.5,784.8 C302,784.8 300.2,785.5 299,787.5 Z"/>
<circle cx="278.9" cy="791.5" r="2.2"/>
</g>
<g transform="translate(278.9,791.5)" fill="none" stroke="#1fa0b4" stroke-width="1.15" stroke-linejoin="round">
<path d="M-1.2,-7.3 L1.2,-7.3 L1.8,-5.2 L3.4,-4.3 L5.5,-5 L7,-2.7 L5.5,-1.2 L5.5,1.2 L7,2.7 L5.5,5 L3.4,4.3 L1.8,5.2 L1.2,7.3 L-1.2,7.3 L-1.8,5.2 L-3.4,4.3 L-5.5,5 L-7,2.7 L-5.5,1.2 L-5.5,-1.2 L-7,-2.7 L-5.5,-5 L-3.4,-4.3 L-1.8,-5.2 Z"/>
</g>
<g fill="#1fa0b4"><circle cx="312.6" cy="791.3" r="1.4"/><circle cx="318.9" cy="791.3" r="1.4"/><circle cx="325.2" cy="791.3" r="1.4"/></g>
<circle cx="504.9" cy="765" r="5.4" fill="#41cde4"/>
<g fill="none" stroke="#1fa0b4" stroke-width="1.15" stroke-linejoin="round" stroke-linecap="round">
<path d="M258.5,847.8 H252.4 C251.9,847.8 251.6,848.1 251.6,848.6 V859.2 C251.6,859.7 251.9,860.0 252.4,860.0 H262.9 C263.4,860.0 263.7,859.7 263.7,859.2 V854.5"/>
<path d="M264.6,845.6 L267.2,848.2 L258.5,856.9 L255.2,857.8 L256.1,854.5 Z M263,847.2 L265.6,849.8"/>
<path d="M299,849.0 C297.8,847.0 296,846.3 294.5,846.3 C292.4,846.3 290.9,848.0 290.9,850.2 C290.9,853.5 295,856.6 299,860.0 C303,856.6 307.1,853.5 307.1,850.2 C307.1,848.0 305.6,846.3 303.5,846.3 C302,846.3 300.2,847.0 299,849.0 Z"/>
<circle cx="278.9" cy="853.0" r="2.2"/>
</g>
<g transform="translate(278.9,853.0)" fill="none" stroke="#1fa0b4" stroke-width="1.15" stroke-linejoin="round">
<path d="M-1.2,-7.3 L1.2,-7.3 L1.8,-5.2 L3.4,-4.3 L5.5,-5 L7,-2.7 L5.5,-1.2 L5.5,1.2 L7,2.7 L5.5,5 L3.4,4.3 L1.8,5.2 L1.2,7.3 L-1.2,7.3 L-1.8,5.2 L-3.4,4.3 L-5.5,5 L-7,2.7 L-5.5,1.2 L-5.5,-1.2 L-7,-2.7 L-5.5,-5 L-3.4,-4.3 L-1.8,-5.2 Z"/>
</g>
<g fill="#1fa0b4"><circle cx="312.6" cy="852.8" r="1.4"/><circle cx="318.9" cy="852.8" r="1.4"/><circle cx="325.2" cy="852.8" r="1.4"/></g>
<circle cx="1279.9" cy="854.8" r="5.5" fill="#fdbb05"/></svg>
<div class="t" style="left:342.00px;top:312px;font-size:13.0px;line-height:13.0px;color:#111;font-weight:400;letter-spacing:0.000px;">2867</div>
<div class="t" style="left:395.00px;top:312px;font-size:13.0px;line-height:13.0px;color:#111;font-weight:400;letter-spacing:0.000px;">123454</div>
<div class="t" style="left:502.50px;top:285px;font-size:13.55px;line-height:13.55px;color:#111;font-weight:400;letter-spacing:0.000px;">Accountant - Government Contractor</div>
<div class="t" style="left:538.60px;top:311px;font-size:10.1px;line-height:10.1px;color:#606060;font-weight:400;letter-spacing:0.412px;">Performs a multitude of accounting activities, included but not limited</div>
<div class="t" style="left:538.60px;top:323px;font-size:10.1px;line-height:10.1px;color:#606060;font-weight:400;letter-spacing:0.419px;">to journal entries, reconciliations, the month end close process and</div>
<div class="t" style="left:538.60px;top:335px;font-size:10.1px;line-height:10.1px;color:#606060;font-weight:400;letter-spacing:0.430px;">audit preparation.  Reconciles balance sheet accounts an...</div>
<div class="t" style="left:901.00px;top:312px;font-size:13.0px;line-height:13.0px;color:#111;font-weight:400;letter-spacing:0.000px;">9</div>
<div class="t" style="left:1053.80px;top:312px;font-size:13.0px;line-height:13.0px;color:#111;font-weight:400;letter-spacing:0.000px;">0</div>
<div class="t" style="left:1167.00px;top:312px;font-size:13.0px;line-height:13.0px;color:#111;font-weight:400;letter-spacing:0.000px;">1</div>
<div class="t" style="left:1293.70px;top:312px;font-size:13.3px;line-height:13.3px;color:#111;font-weight:400;letter-spacing:0.000px;">In Progress</div>
<div class="t" style="left:1448.40px;top:313px;font-size:12.92px;line-height:12.92px;color:#111;font-weight:400;letter-spacing:0.000px;">Cochran, Rebecca</div>
<div class="t" style="left:342.00px;top:386px;font-size:13.0px;line-height:13.0px;color:#111;font-weight:400;letter-spacing:0.000px;">2003</div>
<div class="t" style="left:395.00px;top:386px;font-size:13.0px;line-height:13.0px;color:#111;font-weight:400;letter-spacing:0.000px;">1004</div>
<div class="t" style="left:502.50px;top:359px;font-size:13.55px;line-height:13.55px;color:#111;font-weight:400;letter-spacing:0.000px;">Accountant I</div>
<div class="t" style="left:538.60px;top:385px;font-size:10.1px;line-height:10.1px;color:#606060;font-weight:400;letter-spacing:0.422px;">Analyze financial information and prepare financial reports to determine</div>
<div class="t" style="left:538.60px;top:397px;font-size:10.1px;line-height:10.1px;color:#606060;font-weight:400;letter-spacing:0.375px;">or maintain record of assets, liabilities, profit and loss, tax liability, or</div>
<div class="t" style="left:538.60px;top:409px;font-size:10.1px;line-height:10.1px;color:#606060;font-weight:400;letter-spacing:0.392px;">other financial activities within an organizat...</div>
<div class="t" style="left:901.00px;top:386px;font-size:13.0px;line-height:13.0px;color:#111;font-weight:400;letter-spacing:0.000px;">E01</div>
<div class="t" style="left:1053.80px;top:386px;font-size:13.0px;line-height:13.0px;color:#111;font-weight:400;letter-spacing:0.000px;">4</div>
<div class="t" style="left:1167.00px;top:386px;font-size:13.0px;line-height:13.0px;color:#111;font-weight:400;letter-spacing:0.000px;">234</div>
<div class="t" style="left:342.00px;top:460px;font-size:13.0px;line-height:13.0px;color:#111;font-weight:400;letter-spacing:0.000px;">2004</div>
<div class="t" style="left:395.00px;top:460px;font-size:13.0px;line-height:13.0px;color:#111;font-weight:400;letter-spacing:0.000px;">1007</div>
<div class="t" style="left:502.50px;top:433px;font-size:13.55px;line-height:13.55px;color:#111;font-weight:400;letter-spacing:0.000px;">Accountant II</div>
<div class="t" style="left:538.60px;top:459px;font-size:10.1px;line-height:10.1px;color:#606060;font-weight:400;letter-spacing:0.425px;">Prepares balance sheets, profit and loss statements, and other financial</div>
<div class="t" style="left:538.60px;top:471px;font-size:10.1px;line-height:10.1px;color:#606060;font-weight:400;letter-spacing:0.417px;">reports. Responsibilities also include analyzing trends, costs, revenues,</div>
<div class="t" style="left:538.60px;top:483px;font-size:10.1px;line-height:10.1px;color:#606060;font-weight:400;letter-spacing:0.420px;">financial commitments, and obligations incurred to...</div>
<div class="t" style="left:901.00px;top:460px;font-size:13.0px;line-height:13.0px;color:#111;font-weight:400;letter-spacing:0.000px;">E02</div>
<div class="t" style="left:1053.80px;top:460px;font-size:13.0px;line-height:13.0px;color:#111;font-weight:400;letter-spacing:0.000px;">2</div>
<div class="t" style="left:1167.00px;top:460px;font-size:13.0px;line-height:13.0px;color:#111;font-weight:400;letter-spacing:0.000px;">32</div>
<div class="t" style="left:342.00px;top:534px;font-size:13.0px;line-height:13.0px;color:#111;font-weight:400;letter-spacing:0.000px;">2005</div>
<div class="t" style="left:395.00px;top:534px;font-size:13.0px;line-height:13.0px;color:#111;font-weight:400;letter-spacing:0.000px;">1005</div>
<div class="t" style="left:502.50px;top:507px;font-size:13.55px;line-height:13.55px;color:#111;font-weight:400;letter-spacing:0.000px;">Accountant III</div>
<div class="t" style="left:538.60px;top:533px;font-size:10.1px;line-height:10.1px;color:#606060;font-weight:400;letter-spacing:0.415px;">This is a mid level accounting position typically occupied by a recent</div>
<div class="t" style="left:538.60px;top:545px;font-size:10.1px;line-height:10.1px;color:#606060;font-weight:400;letter-spacing:0.447px;">graduate or a longer-term employee who has risen through the</div>
<div class="t" style="left:538.60px;top:557px;font-size:10.1px;line-height:10.1px;color:#606060;font-weight:400;letter-spacing:0.395px;">bookkeeping ranks.  This is the first level of position requiring...</div>
<div class="t" style="left:901.00px;top:534px;font-size:13.0px;line-height:13.0px;color:#111;font-weight:400;letter-spacing:0.000px;">E03</div>
<div class="t" style="left:1053.80px;top:534px;font-size:13.0px;line-height:13.0px;color:#111;font-weight:400;letter-spacing:0.000px;">3</div>
<div class="t" style="left:1167.00px;top:534px;font-size:13.0px;line-height:13.0px;color:#111;font-weight:400;letter-spacing:0.000px;">15</div>
<div class="t" style="left:1293.70px;top:534px;font-size:13.3px;line-height:13.3px;color:#111;font-weight:400;letter-spacing:0.000px;">In Progress</div>
<div class="t" style="left:1448.40px;top:535px;font-size:12.92px;line-height:12.92px;color:#111;font-weight:400;letter-spacing:0.000px;">Cochran, Rebecca</div>
<div class="t" style="left:342.00px;top:608px;font-size:13.0px;line-height:13.0px;color:#111;font-weight:400;letter-spacing:0.000px;">2006</div>
<div class="t" style="left:395.00px;top:608px;font-size:13.0px;line-height:13.0px;color:#111;font-weight:400;letter-spacing:0.000px;">10012</div>
<div class="t" style="left:502.50px;top:581px;font-size:13.55px;line-height:13.55px;color:#111;font-weight:400;letter-spacing:0.000px;">Accountant IV</div>
<div class="t" style="left:538.60px;top:607px;font-size:10.1px;line-height:10.1px;color:#606060;font-weight:400;letter-spacing:0.425px;">Prepares balance sheets, profit and loss statements, and other financial</div>
<div class="t" style="left:538.60px;top:619px;font-size:10.1px;line-height:10.1px;color:#606060;font-weight:400;letter-spacing:0.417px;">reports. Responsibilities also include analyzing trends, costs, revenues,</div>
<div class="t" style="left:538.60px;top:631px;font-size:10.1px;line-height:10.1px;color:#606060;font-weight:400;letter-spacing:0.420px;">financial commitments, and obligations incurred to...</div>
<div class="t" style="left:901.00px;top:608px;font-size:13.0px;line-height:13.0px;color:#111;font-weight:400;letter-spacing:0.000px;">E05</div>
<div class="t" style="left:1053.80px;top:608px;font-size:13.0px;line-height:13.0px;color:#111;font-weight:400;letter-spacing:0.000px;">3</div>
<div class="t" style="left:1167.00px;top:608px;font-size:13.0px;line-height:13.0px;color:#111;font-weight:400;letter-spacing:0.000px;">0</div>
<div class="t" style="left:342.00px;top:660px;font-size:13.0px;line-height:13.0px;color:#111;font-weight:400;letter-spacing:0.000px;">2752</div>
<div class="t" style="left:395.00px;top:660px;font-size:13.0px;line-height:13.0px;color:#111;font-weight:400;letter-spacing:0.000px;">ACCOUNTANT</div>
<div class="t" style="left:502.30px;top:658px;font-size:8px;line-height:8px;color:#fff;font-weight:700;letter-spacing:0.000px;">P</div>
<div class="t" style="left:517.20px;top:655px;font-size:13.55px;line-height:13.55px;color:#111;font-weight:400;letter-spacing:-0.155px;">Accountant Parent</div>
<div class="t" style="left:901.00px;top:660px;font-size:13.0px;line-height:13.0px;color:#111;font-weight:400;letter-spacing:0.000px;">Z99</div>
<div class="t" style="left:1053.80px;top:660px;font-size:13.0px;line-height:13.0px;color:#111;font-weight:400;letter-spacing:0.000px;">6</div>
<div class="t" style="left:1167.00px;top:660px;font-size:13.0px;line-height:13.0px;color:#111;font-weight:400;letter-spacing:0.000px;">0</div>
<div class="t" style="left:342.00px;top:712px;font-size:13.0px;line-height:13.0px;color:#111;font-weight:400;letter-spacing:0.000px;">2014</div>
<div class="t" style="left:395.00px;top:712px;font-size:13.0px;line-height:13.0px;color:#111;font-weight:400;letter-spacing:0.000px;">00031</div>
<div class="t" style="left:502.50px;top:685px;font-size:13.55px;line-height:13.55px;color:#111;font-weight:400;letter-spacing:0.000px;">Accounting Specialist II</div>
<div class="t" style="left:538.60px;top:711px;font-size:10.1px;line-height:10.1px;color:#606060;font-weight:400;letter-spacing:0.426px;">The accounting specialist will provide accounting support, as described</div>
<div class="t" style="left:538.60px;top:723px;font-size:10.1px;line-height:10.1px;color:#606060;font-weight:400;letter-spacing:0.419px;">under Job Accountabilities, to one of the major financial accounting</div>
<div class="t" style="left:538.60px;top:735px;font-size:10.1px;line-height:10.1px;color:#606060;font-weight:400;letter-spacing:0.443px;">areas (G/L Management, Reconciliation &amp; Control or Accou...</div>
<div class="t" style="left:901.00px;top:712px;font-size:13.0px;line-height:13.0px;color:#111;font-weight:400;letter-spacing:0.000px;">E05</div>
<div class="t" style="left:1053.80px;top:712px;font-size:13.0px;line-height:13.0px;color:#111;font-weight:400;letter-spacing:0.000px;">0</div>
<div class="t" style="left:1167.00px;top:712px;font-size:13.0px;line-height:13.0px;color:#111;font-weight:400;letter-spacing:0.000px;">5</div>
<div class="t" style="left:342.00px;top:787px;font-size:13.0px;line-height:13.0px;color:#111;font-weight:400;letter-spacing:0.000px;">2790</div>
<div class="t" style="left:395.00px;top:787px;font-size:13.0px;line-height:13.0px;color:#111;font-weight:400;letter-spacing:0.000px;">W41N08</div>
<div class="t" style="left:502.30px;top:762px;font-size:8px;line-height:8px;color:#fff;font-weight:700;letter-spacing:0.000px;">C</div>
<div class="t" style="left:517.20px;top:759px;font-size:13.55px;line-height:13.55px;color:#111;font-weight:400;letter-spacing:0.000px;">Acute Care Nurse</div>
<div class="t" style="left:538.60px;top:785px;font-size:10.1px;line-height:10.1px;color:#606060;font-weight:400;letter-spacing:0.418px;">Provides direct and indirect nursing care to assigned patients.</div>
<div class="t" style="left:538.60px;top:797px;font-size:10.1px;line-height:10.1px;color:#606060;font-weight:400;letter-spacing:0.431px;">Worksbreak under the direct and indirect supervision of the Nurse</div>
<div class="t" style="left:538.60px;top:809px;font-size:10.1px;line-height:10.1px;color:#606060;font-weight:400;letter-spacing:0.426px;">Manager orbreak designee but is independent in the application of n...</div>
<div class="t" style="left:901.00px;top:787px;font-size:13.0px;line-height:13.0px;color:#111;font-weight:400;letter-spacing:0.000px;">2N</div>
<div class="t" style="left:1053.80px;top:787px;font-size:13.0px;line-height:13.0px;color:#111;font-weight:400;letter-spacing:0.000px;">0</div>
<div class="t" style="left:1167.00px;top:787px;font-size:13.0px;line-height:13.0px;color:#111;font-weight:400;letter-spacing:0.000px;">8</div>
<div class="t" style="left:342.00px;top:848px;font-size:13.0px;line-height:13.0px;color:#111;font-weight:400;letter-spacing:0.000px;">2857</div>
<div class="t" style="left:395.00px;top:848px;font-size:13.0px;line-height:13.0px;color:#111;font-weight:400;letter-spacing:0.000px;"></div>
<div class="t" style="left:502.50px;top:843px;font-size:13.55px;line-height:13.55px;color:#111;font-weight:400;letter-spacing:0.000px;">adddd</div>
<div class="t" style="left:901.00px;top:848px;font-size:13.0px;line-height:13.0px;color:#111;font-weight:400;letter-spacing:0.000px;"></div>
<div class="t" style="left:1053.80px;top:848px;font-size:13.0px;line-height:13.0px;color:#111;font-weight:400;letter-spacing:0.000px;">0</div>
<div class="t" style="left:1167.00px;top:848px;font-size:13.0px;line-height:13.0px;color:#111;font-weight:400;letter-spacing:0.000px;">0</div>
<div class="t" style="left:1293.70px;top:848px;font-size:13.3px;line-height:13.3px;color:#111;font-weight:400;letter-spacing:0.000px;">In Progress</div>
<div class="t" style="left:1448.40px;top:849px;font-size:12.92px;line-height:12.92px;color:#111;font-weight:400;letter-spacing:0.000px;">Jane Doe</div>
<div class="t" style="left:502.50px;top:882px;font-size:13.55px;line-height:13.55px;color:#111;font-weight:400;letter-spacing:0.000px;">Administrative Assistant</div>
<div class="r" style="left:1861px;top:282px;width:8px;height:618px;background:#efefef;"></div>
<div class="r" style="left:1861px;top:282px;width:8px;height:51px;background:#cdcdcd;"></div>
<div class="r" style="left:243px;top:900px;width:1618px;height:8px;background:#efefef;"></div>
<div class="r" style="left:243px;top:900px;width:994px;height:8px;background:#c9c9c9;"></div>
<div class="r" style="left:1861px;top:900px;width:8px;height:8px;background:#fff;"></div>
<div class="r" style="left:243px;top:908px;width:1626px;height:22px;background:#e3e3e3;"></div>
<div class="r" style="left:1034px;top:910px;width:17px;height:15px;background:#fff;box-sizing:border-box;border:1.5px solid #111;"></div>
<svg class="r" style="left:0px;top:0px;" width="1914" height="931" viewBox="0 0 1914 931">
<g fill="#8d9db6"><rect x="998.7" y="916" width="1.5" height="6.8"/><polygon points="1005.1,916 1005.1,922.8 1000.6,919.4"/>
<polygon points="1024,916 1024,922.8 1019.8,919.4"/></g>
<g fill="#1f3a6e"><polygon points="1089.6,916 1089.6,922.8 1094.3,919.4"/>
<polygon points="1108.9,916 1108.9,922.8 1113.6,919.4"/><rect x="1114.2" y="916" width="1.5" height="6.8"/></g>
</svg>
<div class="t" style="left:1039.50px;top:913px;font-size:11.5px;line-height:11.5px;color:#111;font-weight:400;letter-spacing:0.000px;">1</div>
<div class="t" style="left:1054.00px;top:913px;font-size:11.5px;line-height:11.5px;color:#1f2f5a;font-weight:400;letter-spacing:0.000px;">/</div>
<div class="t" style="left:1063.50px;top:913px;font-size:11.5px;line-height:11.5px;color:#1f2f5a;font-weight:400;letter-spacing:0.000px;">2</div>
<div class="r" style="left:1873px;top:251px;width:40px;height:679px;background:#f4f4f4;"></div>
<svg class="r" style="left:0px;top:0px;" width="1914" height="931" viewBox="0 0 1914 931">
<g fill="none" stroke="#747474" stroke-width="1.1" stroke-linejoin="round" stroke-linecap="round">
<polyline points="1893,261.5 1885.5,269 1893,276.5"/>
<path d="M1896.2,319.5 H1886.3 C1885.8,319.5 1885.4,319.1 1885.4,318.6 V305.1 C1885.4,304.6 1885.8,304.2 1886.3,304.2 H1892.4 L1896.8,308.6 V309.8 M1892.4,304.2 V308.4 H1896.8"/>
<circle cx="1897.1" cy="314.1" r="3.5"/><path d="M1899.6,316.7 L1902.5,319.4"/>
<circle cx="1894.4" cy="347.2" r="2.7"/>
<circle cx="1891.1" cy="340.3" r="1.4"/><circle cx="1901.3" cy="342.1" r="1.4"/><circle cx="1886.6" cy="347.5" r="1.4"/><circle cx="1901.3" cy="351.4" r="1.4"/>
<path d="M1891.8,341.6 L1893,344.6 M1900,342.8 L1896.9,345.6 M1888,347.4 H1891.7 M1900,350.6 L1896.8,348.9"/>
<path d="M1886.3,375.6 C1887.8,373.2 1890.8,371.7 1894.3,371.7 C1898.7,371.7 1902.1,375.3 1902.1,379.8 C1902.1,384.3 1898.7,387.9 1894.3,387.9 C1891.8,387.9 1889.8,387.1 1888.4,385.7"/>
<path d="M1885.8,372.6 V377.3 H1890.2"/>
<path d="M1893.3,375.6 V380.8 L1896.4,382.6"/>
<circle cx="1893.8" cy="407.4" r="2.7"/>
<path d="M1889.4,416.4 C1889.8,412.8 1891.6,411 1893.8,411 C1896,411 1897.8,412.8 1898.2,416.4 M1888,417.9 H1899.6 M1893.8,417.9 V419.2"/>
<circle cx="1886.6" cy="417.9" r="1.4"/><circle cx="1901" cy="417.9" r="1.4"/><circle cx="1893.8" cy="420.6" r="1.4"/>
<circle cx="1894" cy="445.2" r="2.6"/><circle cx="1887.5" cy="445" r="1.8"/><circle cx="1900.5" cy="445" r="1.8"/>
<path d="M1889,454.2 C1889,450.8 1891.2,449.2 1894,449.2 C1896.8,449.2 1899,450.8 1899,454.2 Z M1885.3,452 C1885.3,450.2 1886.2,449.2 1887.5,449.2 M1902.7,452 C1902.7,450.2 1901.8,449.2 1900.5,449.2"/>
<rect x="1885.4" y="477.5" width="17.2" height="9" rx="0.3"/>
<path d="M1894,477.5 V486.5"/>
<path d="M1887.7,485 L1889.8,479 L1891.8,485 M1888.4,483 H1891.1 M1896,479.5 H1900.5 M1898.2,479.5 V480.8 M1896.5,485 L1900,481 M1896.5,481 L1900.5,485"/>
<path d="M1886.1,508.4 H1892.3 C1893.1,508.4 1893.5,508.9 1893.5,509.7 V522.2 C1893.5,523 1893.9,523.5 1894.7,523.5 H1901.9 M1894.5,510.6 H1901.9 M1886.1,521.3 H1892.4 M1886.1,514.5 H1889.5 M1901.9,517.4 H1898.4"/>
<polygon points="1891.9,514.5 1888.9,512.2 1888.9,516.8" fill="#747474" stroke="none"/>
<polygon points="1896,517.4 1899,515.1 1899,519.7" fill="#747474" stroke="none"/>
</g>
</svg>
</body></html>
